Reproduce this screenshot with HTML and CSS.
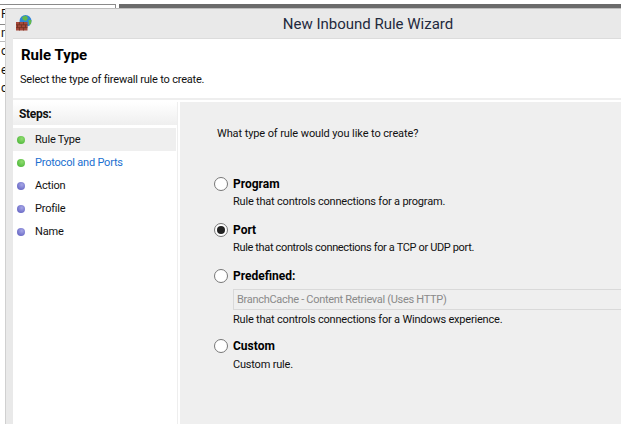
FILE: index.html
```html
<!DOCTYPE html>
<html lang="en">
<head>
    <meta charset="UTF-8">
    <title>New Inbound Rule Wizard</title>
    <link rel="stylesheet" href="styles.css">
</head>
<body>

<!-- window behind the wizard -->
<div class="back-box"></div>
<div class="back-line"></div>
<div class="back-bar"></div>
<div class="back-text">
    <span>F</span>
    <span>n</span>
    <span>ou</span>
    <span>e</span>
    <span>co</span>
</div>

<div class="wizard">
    <div class="titlebar">
        <svg class="app-icon" width="16" height="16" viewBox="0 0 16 16">
            <circle cx="9.5" cy="6" r="6" fill="#2f86d6"/>
            <path d="M6 2 L10 0.5 L12 3 L10 6 L7 5 Z" fill="#63b84a"/>
            <path d="M12.5 5 L15.5 5 L15 9 L13 10 Z" fill="#63b84a"/>
            <rect x="0" y="7" width="11.5" height="8.5" fill="#a5483a"/>
            <path d="M0 9.8 H11.5 M0 12.6 H11.5 M3.5 7 V9.8 M7.5 7 V9.8 M1.5 9.8 V12.6 M5.5 9.8 V12.6 M9.5 9.8 V12.6 M3.5 12.6 V15.5 M7.5 12.6 V15.5" stroke="#70301f" stroke-width="0.8" fill="none"/>
        </svg>
        <div class="title">New Inbound Rule Wizard</div>
    </div>

    <div class="client">
        <div class="header">
            <h1>Rule Type</h1>
            <p>Select the type of firewall rule to create.</p>
        </div>

        <div class="main">
            <div class="steps">
                <div class="steps-head">Steps:</div>
                <ul class="step-list">
                    <li class="step current"><i class="dot green"></i>Rule Type</li>
                    <li class="step link"><i class="dot green"></i>Protocol and Ports</li>
                    <li class="step"><i class="dot blue"></i>Action</li>
                    <li class="step"><i class="dot blue"></i>Profile</li>
                    <li class="step"><i class="dot blue"></i>Name</li>
                </ul>
            </div>

            <div class="content">
                <p class="question">What type of rule would you like to create?</p>

                <div class="option opt-program">
                    <span class="radio"></span>
                    <div class="option-body">
                        <div class="option-name">Program</div>
                        <div class="option-desc">Rule that controls connections for a program.</div>
                    </div>
                </div>

                <div class="option opt-port">
                    <span class="radio checked"></span>
                    <div class="option-body">
                        <div class="option-name">Port</div>
                        <div class="option-desc">Rule that controls connections for a TCP or UDP port.</div>
                    </div>
                </div>

                <div class="option opt-predefined">
                    <span class="radio"></span>
                    <div class="option-body">
                        <div class="option-name">Predefined:</div>
                        <div class="combo">BranchCache - Content Retrieval (Uses HTTP)</div>
                        <div class="option-desc">Rule that controls connections for a Windows experience.</div>
                    </div>
                </div>

                <div class="option opt-custom">
                    <span class="radio"></span>
                    <div class="option-body">
                        <div class="option-name">Custom</div>
                        <div class="option-desc">Custom rule.</div>
                    </div>
                </div>
            </div>
        </div>
    </div>
</div>

</body>
</html>
```

FILE: styles.css
```css
* {
    box-sizing: border-box;
}

html, body {
    margin: 0;
    padding: 0;
    height: 100%;
    overflow: hidden;
}

body {
    font-family: Roboto, "Liberation Sans", Arial, sans-serif;
    font-size: 11px;
    color: #111;
    background-color: #fff;
    position: relative;
}

/* window behind */
.back-box {
    position: absolute;
    top: 4px;
    left: 0;
    width: 116px;
    height: 21px;
    border: 1px solid #8a8a8a;
    border-left: none;
}

.back-line {
    position: absolute;
    top: 41px;
    left: 0;
    width: 6px;
    height: 1px;
    background-color: #bbb;
}

.back-bar {
    position: absolute;
    top: 4px;
    left: 119px;
    right: 0;
    height: 4px;
    background-color: #6b6b6b;
}

.back-text {
    position: absolute;
    top: 7px;
    left: 1px;
    display: flex;
    flex-direction: column;
    gap: 4px;
    font-size: 12px;
    line-height: 14.5px;
}

/* wizard window */
.wizard {
    position: absolute;
    top: 8px;
    left: 5px;
    right: 0;
    bottom: 0;
    display: flex;
    flex-direction: column;
    background-color: #e9e9e9;
    border-top: 1px solid #bdbdbd;
    border-left: 1px solid #d0d0d0;
}

.titlebar {
    height: 29px;
    flex-shrink: 0;
    position: relative;
    display: flex;
    align-items: center;
    justify-content: center;
    padding-left: 109px; /* real window is wider than the shot */
}

.app-icon {
    position: absolute;
    top: 6px;
    left: 10px;
}

.title {
    font-size: 15px;
    color: #1f2a3d;
}

.client {
    flex: 1;
    min-height: 0;
    margin-left: 7px;
    display: flex;
    flex-direction: column;
    background-color: #fff;
    border-top: 1px solid #dcdcdc;
}

.header {
    height: 61px;
    flex-shrink: 0;
    padding: 8px 0 0 8px;
    border-bottom: 2px solid #eee;
}

h1 {
    margin: 0;
    font-size: 15px;
    line-height: 17px;
    font-weight: bold;
    color: #000;
}

.header p {
    margin: 9px 0 0 -1px;
    font-size: 11px;
    line-height: 14px;
    letter-spacing: -0.2px;
}

.main {
    flex: 1;
    display: flex;
    background-color: #fff;
    padding-top: 2px;
}

/* left side */
.steps {
    width: 165px;
    flex-shrink: 0;
    margin-right: 2px;
    background-color: #fff;
    border-right: 1px solid #eee;
}

.steps-head {
    height: 23px;
    padding: 5px 0 0 6px;
    font-size: 12px;
    line-height: 14px;
    font-weight: bold;
    letter-spacing: -0.3px;
    background: linear-gradient(#fff, #efefef);
}

.step-list {
    list-style: none;
    margin: 3px 0 0;
    padding: 0;
}

.step {
    height: 23px;
    width: 163px;
    display: flex;
    align-items: center;
    padding-left: 4px;
    font-size: 11px;
    letter-spacing: -0.2px;
}

.step.current {
    background-color: #efefef;
}

.step.link {
    color: #1a6fd0;
}

.dot {
    width: 8px;
    height: 8px;
    border-radius: 50%;
    margin-right: 10px;
}

.dot.green {
    background: radial-gradient(circle at 60% 35%, #8fdc70, #3fae2e);
}

.dot.blue {
    background: radial-gradient(circle at 60% 35%, #a6a6e6, #5555bb);
}

/* right side */
.content {
    flex: 1;
    min-width: 0;
    background-color: #efefef;
    padding: 25px 0 0 34px;
}

.question {
    margin: 0 0 0 3px;
    font-size: 11px;
    line-height: 14px;
    letter-spacing: -0.1px;
}

.option {
    display: flex;
    align-items: flex-start;
}

.opt-program {
    margin-top: 36px;
}

.opt-port {
    margin-top: 14px;
}

.opt-predefined {
    margin-top: 14px;
}

.opt-custom {
    margin-top: 12px;
}

.radio {
    width: 14px;
    height: 14px;
    margin-right: 5px;
    flex-shrink: 0;
    border-radius: 50%;
    border: 1px solid #777;
    background-color: #fff;
    display: flex;
    align-items: center;
    justify-content: center;
}

.radio.checked::after {
    content: "";
    width: 8px;
    height: 8px;
    border-radius: 50%;
    background-color: #222;
}

.option-body {
    flex: 1;
    min-width: 0;
}

.option-name {
    font-size: 12px;
    line-height: 14px;
    font-weight: bold;
    color: #000;
}

.option-desc {
    margin-top: 4px;
    font-size: 11px;
    line-height: 14px;
    letter-spacing: -0.2px;
}

.opt-port .option-desc {
    letter-spacing: -0.35px;
}

.combo {
    height: 21px;
    margin-top: 6px;
    padding: 2px 3px;
    font-size: 11px;
    line-height: 15px;
    letter-spacing: -0.3px;
    color: #8a8a8a;
    border: 1px solid #d9d9d9;
    border-right: none;
    background-color: #efefef;
}

.opt-predefined .option-desc {
    margin-top: 3px;
}

.opt-custom .option-desc {
    margin-top: 5px;
}
```
